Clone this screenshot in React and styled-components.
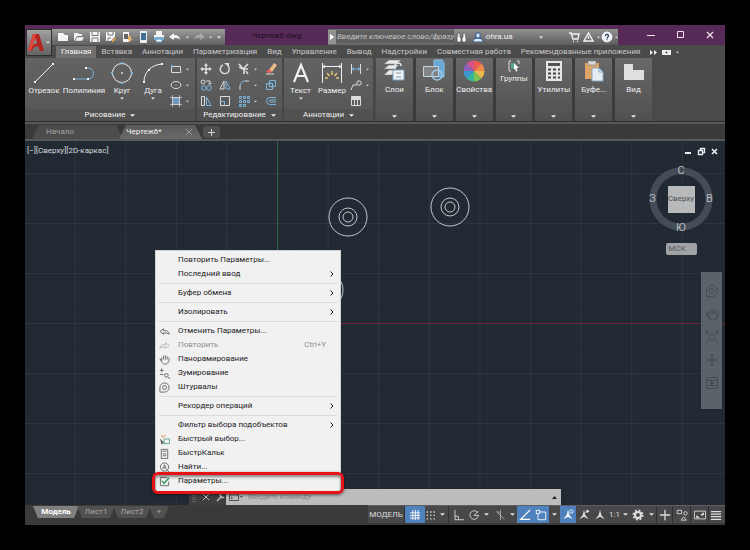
import React from "react";
import styled, { createGlobalStyle, css } from "styled-components";

const GlobalStyle = createGlobalStyle`
    * {
        box-sizing: border-box;
    }

    body {
        margin: 0;
        background: #000;
        font-family: Roboto, "Open Sans", "Noto Sans", sans-serif;
        font-size: 8px;
        line-height: 12px;
        color: #e2e2e2;
    }

    button, input {
        margin: 0;
        padding: 0;
        border: 0;
        background: none;
        color: inherit;
        font: inherit;
    }
`;

const Screen = styled.div`
    height: 100vh;
    min-height: 400px;
    padding: 25px;
`;

const Window = styled.main`
    display: flex;
    flex-direction: column;
    height: 100%;
    background: #3a3a3b;
    overflow: hidden;
`;

const Svg = styled.svg`
    display: block;
    flex: none;
    fill: none;
    stroke: currentColor;
    stroke-width: 1;
`;

const Icon = ({ w = 12, h = w, box = `0 0 ${w} ${h}`, children }) => (
    <Svg width={w} height={h} viewBox={box} aria-hidden="true">{children}</Svg>
);

const Caret = ({ w = 5 }) => (
    <Icon w={w} h={3} box="0 0 6 3"><path d="M0 0h6L3 3z" fill="currentColor" stroke="none" /></Icon>
);

/* ---------- header ---------- */

const Header = styled.header`
    display: grid;
    grid-template-columns: 27px 1fr;
    grid-template-rows: 20px 13px;
    background: #4b4b4c;
`;

const Logo = styled.button`
    grid-row: 1 / 3;
    display: flex;
    align-items: center;
    gap: 1px;
    margin: 4px 0 2px 1px;
    background: linear-gradient(#a2a2a2, #626262);
    border: 1px solid #2f2f2f;
    z-index: 1;
`;

const TitleBar = styled.div`
    display: flex;
    align-items: flex-end;
    margin-left: -27px;
    padding-left: 27px;
    background: #572a58;
`;

const QuickAccess = styled.div`
    display: flex;
    align-items: center;
    width: 173px;
    height: 16px;
    padding-left: 3px;
    background: linear-gradient(#9c9c9c, #606060);
    color: #f4f4f4;
`;

const QuickButton = styled.button`
    display: flex;
    align-items: center;
    justify-content: center;
    width: ${p => p.$w || 16}px;
    height: 16px;
    opacity: ${p => p.$dim ? 0.35 : 1};
`;

const FileName = styled.h1`
    flex: 1;
    margin: 0;
    font-size: 8px;
    font-weight: 400;
    line-height: 18px;
    text-align: center;
    color: #1c0c1d;
`;

const Search = styled.label`
    display: flex;
    align-items: center;
    width: 126px;
    height: 16px;
    background: #6d6a6d;
`;

const SearchArrow = styled.span`
    display: flex;
    align-items: center;
    justify-content: center;
    width: 8px;
    height: 14px;
    background: #929292;
`;

const SearchInput = styled.input`
    flex: 1;
    min-width: 0;
    height: 12px;
    padding: 0 0 0 1px;
    background: #5f5f5f;
    font-style: italic;

    &::placeholder {
        color: #c3c3c3;
    }
`;

const Account = styled.div`
    display: flex;
    align-items: center;
    width: 164px;
    height: 16px;
    background: linear-gradient(#929292, #5c5c5c);
    color: #f2f2f2;
`;

const WindowControls = styled.div`
    display: flex;
    align-items: center;
    width: 107px;
    height: 20px;
    padding-left: 18px;
`;

const WindowButton = styled.button`
    display: flex;
    align-items: center;
    justify-content: center;
    width: 30px;
    height: 18px;
    color: #efe6ef;
`;

const Tabs = styled.nav`
    display: flex;
    align-items: flex-end;
    padding-left: 4px;
    color: #c9c9c9;
    white-space: nowrap;
`;

const Tab = styled.button`
    height: 12px;
    padding: 0 5px;
    line-height: 12px;
    ${p => p.$active && css`
        background: #707070;
        color: #f2f2f2;
    `}
`;

const TabsExtra = styled.span`
    display: flex;
    align-items: center;
    gap: 5px;
    height: 12px;
    padding-left: 5px;
    color: #f0f0f0;
`;

/* ---------- ribbon ---------- */

const Ribbon = styled.section`
    display: flex;
    height: 64px;
    background: #4a4a4b;
    border-bottom: 1px solid #2f2f30;
    box-shadow: 0 2px #58585a;
    z-index: 1;
`;

const Panel = styled.div`
    display: flex;
    flex-direction: column;
    width: ${p => p.$w}px;
    padding-top: 3px;
    background: linear-gradient(#636364, #555556);
    border-right: 2px solid #474748;
`;

const PanelBody = styled.div`
    display: flex;
    flex: 1;
`;

const PanelTitle = styled.button`
    display: flex;
    align-items: center;
    justify-content: center;
    gap: 5px;
    height: 12px;
    background: #515152;
    color: #f0f0f0;
`;

const Tool = styled.button`
    display: flex;
    flex-direction: column;
    align-items: center;
    width: ${p => p.$w}px;
    height: 46px;
    white-space: nowrap;
    color: #f0f0f0;
`;

const ToolPicture = styled.span`
    display: flex;
    align-items: center;
    justify-content: center;
    height: 24px;
`;

const SmallTools = styled.div`
    display: grid;
    grid-template-columns: ${p => p.$cols};
    grid-template-rows: repeat(3, 16px);
    flex: 1;
    padding-left: 3px;
    color: #dcdcdc;
`;

const SmallTool = styled.button`
    display: flex;
    align-items: center;
    gap: 4px;
`;

const Groups = styled.div`
    display: grid;
    grid-template-columns: repeat(7, 1fr);
    gap: 3px;
    width: 276px;
    margin-left: 1px;
    background: #3c3c3d;
`;

const Group = styled.button`
    display: flex;
    flex-direction: column;
    align-items: center;
    background: linear-gradient(#69696a, #505051);
    color: #f0f0f0;
    white-space: nowrap;
`;

const GroupPicture = styled.span`
    display: flex;
    align-items: center;
    justify-content: center;
    height: ${p => p.$short ? 15 : 26}px;
`;

const GroupCaret = styled.span`
    margin: auto 0 3px;
`;

/* ---------- drawing tabs ---------- */

const FileTabs = styled.nav`
    display: flex;
    align-items: flex-end;
    height: 19px;
    padding-left: 7px;
    background: #3a3a38;
    border-bottom: 2px solid #58585a;
`;

const FileTab = styled.button`
    display: flex;
    align-items: center;
    justify-content: space-between;
    width: ${p => p.$w}px;
    height: 14px;
    margin-right: -4px;
    padding: 0 10px 0 ${p => p.$active ? 7 : 14}px;
    clip-path: polygon(7px 0, calc(100% - 7px) 0, 100% 100%, 0 100%);
    background: ${p => p.$active ? "linear-gradient(#5b5b5c, #69696a)" : "#4c4c4d"};
    color: ${p => p.$active ? "#f2f2f2" : "#a5a5a5"};
`;

const AddTab = styled.button`
    display: flex;
    align-items: center;
    justify-content: center;
    width: 17px;
    height: 12px;
    margin: 0 0 1px 5px;
    border-radius: 3px;
    background: #505051;
    color: #d5d5d5;
`;

/* ---------- canvas ---------- */

const Canvas = styled.section`
    position: relative;
    flex: 1;
    min-height: 0;
    background: #212a33;
`;

const Drawing = styled.svg`
    position: absolute;
    inset: 0;
    width: 100%;
    height: 100%;
    fill: none;
`;

const ViewLabel = styled.div`
    position: absolute;
    top: 4px;
    left: 2px;
    color: #d6dade;
`;

const DocControls = styled.div`
    position: absolute;
    top: 5px;
    right: 6px;
    display: flex;
    gap: 4px;
    color: #eceef0;
`;

const ViewCube = styled.div`
    position: absolute;
    top: 23px;
    right: 9px;
    display: flex;
    flex-direction: column;
    align-items: center;
    width: 70px;
    gap: 9px;
`;

const Compass = styled.div`
    display: grid;
    grid-template: 13px 1fr 13px / 13px 1fr 13px;
    place-items: center;
    width: 70px;
    height: 70px;
    font-size: 11px;
    color: #b9bdc2;
    background: radial-gradient(circle, transparent 24px, #444c55 25px, #444c55 31px, transparent 32px);
`;

const CompassMark = styled.span`
    grid-area: ${p => p.$area};
`;

const CubeFace = styled.button`
    grid-area: 2 / 2;
    width: 27px;
    height: 27px;
    background: #b8b9bb;
    font-size: 8px;
    color: #4c4f53;
`;

const Ucs = styled.button`
    width: 31px;
    height: 12px;
    padding-right: 8px;
    border-radius: 2px;
    background: #a0a2a6;
    line-height: 12px;
    color: #55585c;
`;

const NavBar = styled.div`
    position: absolute;
    top: 131px;
    right: 3px;
    display: flex;
    flex-direction: column;
    align-items: center;
    gap: 9px;
    width: 21px;
    height: 137px;
    padding-top: 12px;
    background: #5c6269;
    color: #454b53;
`;

const CommandLine = styled.label`
    position: absolute;
    bottom: 0;
    left: 164px;
    display: flex;
    align-items: center;
    width: 372px;
    height: 16px;
    background: #bcbcbd;
    color: #555;
`;

const CommandHandle = styled.span`
    display: flex;
    align-items: center;
    gap: 7px;
    width: 37px;
    height: 16px;
    padding-left: 3px;
    background: #3f3f41;
    color: #bdbdbd;
`;

const CommandInput = styled.input`
    flex: 1;
    min-width: 0;
    margin: 0 5px;
    font-style: italic;

    &::placeholder {
        color: #8a8a8a;
    }
`;

/* ---------- context menu ---------- */

const Menu = styled.div`
    position: absolute;
    top: 109px;
    left: 130px;
    width: 186px;
    padding: 2px 0 4px;
    background: #f1f1f2;
    border: 1px solid #d2d3d5;
    color: #1b1b1b;
`;

const MenuItem = styled.button`
    position: relative;
    display: grid;
    grid-template-columns: 22px 1fr auto;
    align-items: center;
    width: 100%;
    height: 14px;
    padding-right: 6px;
    text-align: left;
    white-space: nowrap;
    color: ${p => p.disabled ? "#8e8e8e" : "#1b1b1b"};
    ${p => p.$marked && css`
        &::after {
            content: "";
            position: absolute;
            inset: -2px -4px -6px;
            border: 3px solid #e51316;
            border-radius: 6px;
            box-shadow: 0 1px 3px rgba(0, 0, 0, 0.6), inset 0 2px 3px rgba(0, 0, 0, 0.45);
        }
    `}
`;

const MenuIcon = styled.span`
    display: flex;
    justify-content: center;
    width: 17px;
    color: #666;
`;

const Shortcut = styled.span`
    padding-right: 8px;
`;

const Separator = styled.hr`
    height: 1px;
    margin: 2px 3px;
    border: 0;
    background: #d9d9da;
`;

/* ---------- status bar ---------- */

const StatusBar = styled.footer`
    display: flex;
    align-items: flex-start;
    justify-content: space-between;
    height: 20px;
    padding-left: 8px;
`;

const Layouts = styled.div`
    display: flex;
    padding-top: 1px;
`;

const LayoutTab = styled.button`
    width: ${p => p.$w}px;
    height: 12px;
    margin-right: -2px;
    clip-path: polygon(0 0, 100% 0, calc(100% - 5px) 100%, 5px 100%);
    background: ${p => p.$active ? "#808081" : "#515152"};
    color: ${p => p.$active ? "#fff" : "#a8a8a8"};
    font-weight: ${p => p.$active ? 700 : 400};
`;

const Modes = styled.div`
    display: flex;
    height: 18px;
    padding-right: 3px;
    background: #48484a;
    border-top: 1px solid #5e5e60;
    color: #dedede;
`;

const Mode = styled.button`
    display: flex;
    align-items: center;
    justify-content: center;
    width: ${p => p.$w}px;
    background: ${p => p.$on ? "#4f82bd" : "none"};
    color: ${p => p.$on ? "#fff" : "inherit"};
    border-right: ${p => p.$line ? "1px solid #303032" : "0"};
    white-space: nowrap;
`;

/* ---------- icon drawings ---------- */

const blue = "#7db4dc";

const quick = [
    { name: "Создать", icon: <path d="M1 2h5l2 2h3v6H1z" fill="currentColor" stroke="none" /> },
    { name: "Открыть", icon: <><path d="M1 10V2h4l1 1h3v2H4z" fill="currentColor" stroke="none" /><path d="M4 6h7.5L9 10H2z" fill="currentColor" stroke="#777" strokeWidth=".5" /></> },
    { name: "Сохранить", icon: <><path d="M1 1h10v10H1z" fill="currentColor" stroke="none" /><path d="M3 1v3.500h6V1M3 11V7h6v4" stroke="#777" /></> },
    { name: "Сохранить как", icon: <><path d="M1 1h9v9H1z" fill="currentColor" stroke="none" /><path d="M3 1v3h5V1M3 10V7h3" stroke="#777" /><path d="M6 10l4-4 1.500 1.500-4 4z" fill="#e0a557" stroke="#555" strokeWidth=".5" /></> },
    { name: "Из облака", icon: <><path d="M2 1h6v10H2z" fill="currentColor" stroke="none" /><path d="M3 3h4v5H3z" fill="#666" stroke="none" /><path d="M7 5h3v3h1.500L9 11 6.500 8H7z" fill="#e2b263" stroke="none" /></> },
    { name: "В облако", icon: <><path d="M3 0h7v12H3z" fill="#e9edf0" stroke="none" /><path d="M4 2h5v7H4z" fill="#3f6d94" stroke="none" /></> },
    { name: "Печать", icon: <><path d="M3 0h6v4H3zM1 4h10v5H1z" fill="currentColor" stroke="none" /><path d="M1 6h10v3H1z" fill={blue} stroke="none" /><path d="M3 8h6v3H3z" fill="#fff" stroke="#5590bd" /></> },
];

const Undo = () => <Icon w={12}><path d="M0 6l5-4v2c4 0 6 2 6 5-1-2-3-2-6-2v2z" fill="currentColor" stroke="none" /></Icon>;
const Redo = () => <Icon w={12}><path d="M12 6L7 2v2C3 4 1 6 1 9c1-2 3-2 6-2v2z" fill="currentColor" stroke="none" /></Icon>;

const drawTools = [
    { label: "Отрезок", w: 38, icon: <Icon w={22}><path d="M2 20L20 2" /><path d="M1 19h2v2H1zM19 1h2v2h-2z" fill="currentColor" stroke="none" /></Icon> },
    { label: "Полилиния", w: 42, icon: <Icon w={24} h={22}><path d="M2 17h14a5 5 0 0 0 0-11h-1" stroke={blue} /><path d="M1 16h2v2H1zM15 16h2v2h-2zM13 5h2v2h-2z" fill="currentColor" stroke="none" /></Icon> },
    { label: "Круг", w: 34, caret: true, icon: <Icon w={22}><circle cx="11" cy="11" r="9.500" /><circle cx="11" cy="11" r=".6" /><path d="M10 0h2v2h-2zM10 20h2v2h-2zM0 10h2v2H0zM20 10h2v2h-2z" fill={blue} stroke="none" /></Icon> },
    { label: "Дуга", w: 28, caret: true, icon: <Icon w={22}><path d="M2 20C2 10 9 3 20 2" /><path d="M1 19h2v2H1zM19 1h2v2h-2zM6 7h2v2H6z" fill="currentColor" stroke="none" /></Icon> },
];

const drawSmall = [
    <><path d="M1.500 3.500h9v6h-9z" /><path d="M1 3h1.500M10 9h1.500" stroke={blue} strokeWidth="2" /></>,
    <><ellipse cx="6" cy="6" rx="5" ry="3.500" /><path d="M5.500 6h1" /></>,
    <><path d="M2.500 2.500h7v7h-7z" fill="#7198bb" stroke={blue} /><path d="M0 2.500h12M0 9.500h12M2.500 0v12M9.500 0v12" strokeWidth=".7" /></>,
];

const editSmall = [
    { name: "Перенести", icon: <><path d="M6 1v10M1 6h10" strokeWidth="1.500" /><path d="M4 3l2-3 2 3zM4 9l2 3 2-3zM3 4L0 6l3 2zM9 4l3 2-3 2z" fill="currentColor" stroke="none" /></> },
    { name: "Повернуть", icon: <><path d="M4 2a4.500 4.500 0 1 0 5 1" strokeWidth="1.400" /><path d="M5 0h5v4z" fill="currentColor" stroke="none" /></> },
    { name: "Обрезать", caret: true, icon: <><path d="M1 1l4 5h5M10 1L6 5v6" strokeWidth="1.700" /><path d="M1 4l3 2M8 8l2 3" strokeWidth="1.400" /></> },
    { name: "Стереть", icon: <><path d="M4 7l5-7 3 2-5 7z" fill="#e9bd86" stroke="none" /><path d="M1 9l3-3 3 3-3 1z" fill="#e8605c" stroke="none" /><path d="M1 11h8" /></> },
    { name: "Копировать", icon: <><circle cx="3" cy="3" r="2" /><circle cx="4" cy="9" r="2.300" stroke={blue} /><circle cx="9" cy="9" r="2.300" stroke={blue} /><path d="M6 2h4v3M8.500 4L10 5.500 11.500 4" /></> },
    { name: "Зеркало", icon: <><path d="M5 2v8H1z" /><path d="M7 2v8h4z" stroke={blue} /></> },
    { name: "Сопряжение", caret: true, icon: <><path d="M2 11V6M7 2h4" /><path d="M2 7c0-3 2-5 5-5" stroke={blue} /></> },
    { name: "Расчленить", icon: <><path d="M1.500 4.500h6v6h-6zM4.500 1.500h6v6h-6z" stroke={blue} /><circle cx="6" cy="6" r="2" stroke={blue} /></> },
    { name: "Растянуть", icon: <><path d="M1.500 1.500h3v9h-3z" /><path d="M6.500 2v8.500h4.500z" stroke={blue} /></> },
    { name: "Масштаб", icon: <><path d="M1.500 1.500h9v9h-9z" /><path d="M1.500 6.500h4v4" stroke={blue} /></> },
    { name: "Массив", caret: true, icon: <path d="M1.500 1.500h2v2h-2zM5.500 1.500h2v2h-2zM9.500 1.500h2v2h-2zM1.500 5.500h2v2h-2zM5.500 5.500h2v2h-2zM9.500 5.500h2v2h-2zM1.500 9.500h2v2h-2zM5.500 9.500h2v2h-2z" stroke={blue} /> },
    { name: "Подобие", icon: <path d="M11 2.500H5a3.500 3.500 0 0 0 0 7h6M11 5H5.500a1 1 0 0 0 0 2H11" stroke={blue} /> },
];

const noteSmall = [
    { name: "Линейный", caret: true, icon: <><path d="M1.500 1v10M10.500 1v10" /><path d="M2 6h8M4 4.500L2 6l2 1.500M8 4.500L10 6 8 7.500" stroke={blue} /></> },
    { name: "Выноска", caret: true, icon: <><path d="M1 11l2-5h4" /><circle cx="9" cy="4" r="2.200" /></> },
    { name: "Таблица", icon: <><path d="M1.500 1.500h9v9h-9zM1.500 4.500h9M4.500 4.500v6M7.500 4.500v6" /><path d="M2 2h8v2H2z" fill="currentColor" stroke="none" /></> },
];

const groups = [
    {
        label: "Слои",
        icon: <Icon w={24}><path d="M7 1h12l-5 4H2z M7 6h10l-5 4H2zM7 11h7l-4 5H2z" fill="#e9e9e9" stroke="#777" strokeWidth=".5" /><path d="M13 10V7a3 3 0 0 1 6 0" stroke="#dfe9f1" strokeWidth="1.500" /><path d="M11 11h11v10H11z" fill="#eef2f5" stroke="#7ca8c9" /><path d="M14 18h5M14 14h5" stroke="#8794a0" /></Icon>,
    },
    {
        label: "Блок",
        icon: <Icon w={24}><path d="M12 1h8l2 3v14H12z" fill="#69a9d8" stroke="#8ac0e6" /><path d="M1.500 7.500h15v10h-15z" fill="#808487" stroke="#c7d3db" /><circle cx="15" cy="16" r="5" stroke="#9fcbe9" strokeWidth="1.500" /></Icon>,
    },
    {
        label: "Свойства",
        icon: (
            <Icon w={22} box="-11 -11 22 22">
                {["#ee5b4c", "#f08a4b", "#ebb94d", "#7dc352", "#35b59a", "#3d98d2", "#8c62bd", "#d8508b"].map((fill, i) => (
                    <path key={fill} d="M0 0V-10.500A10.500 10.500 0 0 1 7.420 -7.420z" fill={fill} stroke="none" transform={`rotate(${i * 45})`} />
                ))}
            </Icon>
        ),
    },
    {
        label: "Группы",
        short: true,
        icon: <Icon w={12}><path d="M3 1H1v10h2M9 1h2v3" stroke="#dcdcdc" /><path d="M3 3h3v6H3z" fill="#55a68b" stroke="none" /><path d="M6 3l5 5H8.500l1 3-1.500.5-1-3L6 10z" fill="#fff" stroke="none" /></Icon>,
    },
    {
        label: "Утилиты",
        icon: <Icon w={16} h={22}><path d="M0 1h16v20H0z" fill="#e6e6e6" stroke="none" /><path d="M2 3h12v3H2z" fill="#555" stroke="none" /><path d="M2 9.500h3m2 0h3m2 0h2M2 13.500h3m2 0h3m2 0h2M2 17.500h3m2 0h3m2 0h2" stroke="#444" strokeWidth="2" /></Icon>,
    },
    {
        label: "Буфе...",
        icon: <Icon w={20} h={22}><path d="M1 3h14v16H1z" fill="#dca668" stroke="none" /><path d="M4 1h8v4H4z" fill="#d5d7da" stroke="#777" strokeWidth=".5" /><path d="M8 8h7l4 4v9H8z" fill="#e8edf2" stroke="#89a9c4" /><path d="M15 8v4h4" stroke="#89a9c4" /></Icon>,
    },
    {
        label: "Вид",
        icon: <Icon w={22}><path d="M1 4h9v6h11v10H1z" fill="#dedfe0" stroke="none" /></Icon>,
    },
];

const menuIcons = {
    undo: <path d="M1 6l4-3v2c4 0 6 1 6 4-1-1-3-1.500-6-1.500V9z" />,
    redo: <path d="M11 6L7 3v2C3 5 1 6 1 9c1-1 3-1.500 6-1.500V9z" opacity=".4" />,
    hand: <path d="M3 7V3.500M5 6V1.500M7 6V1.500M9 6V2.500M11 7V4M3 7L1 5.500 4 10c2 2 6 1.500 7-3" />,
    zoom: <><path d="M1 2.500h4M3 .5v4M1 7h4" /><circle cx="8" cy="8" r="2" /><path d="M9.500 9.500L12 12" /></>,
    wheel: <><path d="M1 11V6a5 5 0 1 1 5 5z" /><circle cx="6" cy="6" r="2.200" /></>,
    select: <><path d="M1 5l5 5H4l-1 2z" fill="#555" stroke="none" /><path d="M5.500 5.500h6v5h-6z" stroke="#5ba18b" /><path d="M3 1l1 3M7 1L5 4" stroke="#e08c42" /></>,
    calc: <><path d="M2.500 1.500h7v10h-7z" /><path d="M4 3.500h4M4 6.500h4M4 8.500h4" /></>,
    find: <><circle cx="6" cy="5.500" r="4.500" /><path d="M4 8l2-5 2 5M5 6.500h2M9 9l2.500 2.500" /></>,
    options: <><path d="M9 1.500H1.500v9h9V6" /><path d="M3 5l2.500 3L11 2" stroke="#3a9a64" strokeWidth="1.500" /></>,
};

const menuGroups = [
    [{ text: "Повторить Параметры..." }, { text: "Последний ввод", sub: true }],
    [{ text: "Буфер обмена", sub: true }],
    [{ text: "Изолировать", sub: true }],
    [
        { text: "Отменить Параметры...", icon: "undo" },
        { text: "Повторить", icon: "redo", disabled: true, keys: "Ctrl+Y" },
        { text: "Панорамирование", icon: "hand" },
        { text: "Зумирование", icon: "zoom" },
        { text: "Штурвалы", icon: "wheel" },
    ],
    [{ text: "Рекордер операций", sub: true }],
    [
        { text: "Фильтр выбора подобъектов", sub: true },
        { text: "Быстрый выбор...", icon: "select" },
        { text: "БыстрКальк", icon: "calc" },
        { text: "Найти...", icon: "find" },
        { text: "Параметры...", icon: "options", marked: true },
    ],
];

const tabs = [
    "Главная", "Вставка", "Аннотации", "Параметризация", "Вид", "Управление",
    "Вывод", "Надстройки", "Совместная работа", "Рекомендованные приложения",
];

const annotate = <path d="M7 1l1.500 6 4 5L7 9l-5.500 3 4-5z" fill="currentColor" stroke="none" />;

const modes = [
    { name: "МОДЕЛЬ", w: 37, text: true, line: true },
    { name: "Сетка", w: 20, on: true, icon: <path d="M4.500 1v12M7.500 1v12M10.500 1v12M1 4.500h12M1 7.500h12M1 10.500h12" /> },
    { name: "Шаг", w: 12, icon: <path d="M2 3.500h11M2 7.500h11M2 11.500h11" strokeWidth="1.500" strokeDasharray="1.500 2.500" /> },
    { name: "Параметры шага", w: 12, caret: true, line: true },
    { name: "Орто", w: 18, icon: <path d="M3.500 1v11.500H14M3.500 8.500h4v4" /> },
    { name: "Полярное отслеживание", w: 13, icon: <path d="M11.500 4.500a5 5 0 1 0 .5 4M7 7.500h6M7 7.500l5-5" /> },
    { name: "Углы", w: 12, caret: true },
    { name: "Изометрия", w: 15, icon: <path d="M7.500 1v12M3 3l9 9M4 2l2 3" opacity=".7" /> },
    { name: "Изоплоскость", w: 10, caret: true },
    { name: "Объектное отслеживание", w: 16, on: true, icon: <path d="M13 1L2 12h11" strokeWidth="1.500" /> },
    { name: "Объектная привязка", w: 16, on: true, icon: <><path d="M3.500 3.500h9v9h-9z" /><path d="M1.500 1.500h4v4h-4z" fill="#4f82bd" /></> },
    { name: "Режимы привязки", w: 11, caret: true },
    { name: "Видимость аннотаций", w: 16, on: true, icon: <>{annotate}<circle cx="11" cy="3" r="2" /></> },
    { name: "Автомасштаб", w: 16, icon: <>{annotate}<path d="M9 4l2-3 2 2z" fill="currentColor" /></> },
    { name: "Аннотации", w: 16, icon: annotate },
    { name: "1:1", w: 13, text: true },
    { name: "Масштаб аннотаций", w: 9, caret: true },
    { name: "Рабочее пространство", w: 16, icon: <><circle cx="7" cy="7" r="3.500" strokeWidth="2.500" /><circle cx="7" cy="7" r="5.500" strokeWidth="2" strokeDasharray="2.200 2.120" /></> },
    { name: "Пространства", w: 11, caret: true, line: true },
    { name: "Монитор аннотаций", w: 16, line: true, icon: <path d="M7 1v12M1 7h12" strokeWidth="1.500" /> },
    { name: "Изоляция объектов", w: 18, line: true, icon: <><path d="M1.500 1.500h5v4h-5zM6 13l3-4 3 4z" /><circle cx="11" cy="5" r="2" /></> },
    { name: "Очистить экран", w: 18, line: true, icon: <><path d="M.5 2.500h13v9H.5z" /><path d="M8 7l3-2.500v2.500zM3 10V8l3 2z" fill="currentColor" /></> },
    { name: "Адаптация", w: 13, icon: <path d="M1 3h12M1 6h12M1 9h12M1 12h12" strokeWidth="1.500" /> },
];

/* ---------- sections ---------- */

const TopBar = () => (
    <Header>
        <Logo aria-label="Меню приложения">
            <Icon w={18} h={20}>
                <path d="M1 18L6 1h6l5 17h-4l-2-5-5 2-1 3z" fill="#b3231f" stroke="none" />
                <path d="M1 18L6 1h3L7 9l-2 6-1 3z" fill="#e0473c" stroke="none" />
                <path d="M7 9l1.500-4L10 10l-4 2z" fill="#8e8e8e" stroke="none" />
            </Icon>
            <Caret w={4} />
        </Logo>
        <TitleBar>
            <QuickAccess>
                {quick.map(q => (
                    <QuickButton key={q.name} aria-label={q.name}><Icon w={12}>{q.icon}</Icon></QuickButton>
                ))}
                <QuickButton aria-label="Отменить"><Undo /></QuickButton>
                <QuickButton aria-label="История отмены" $w={8}><Caret w={3} /></QuickButton>
                <QuickButton aria-label="Повторить" $dim><Redo /></QuickButton>
                <QuickButton aria-label="История повтора" $w={6}><Caret w={3} /></QuickButton>
                <QuickButton aria-label="Настройка панели" $w={12}><Caret w={4} /></QuickButton>
            </QuickAccess>
            <FileName>Чертеж6.dwg</FileName>
            <Search>
                <SearchArrow><Icon w={4} h={6}><path d="M0 0l4 3-4 3z" fill="#fff" stroke="none" /></Icon></SearchArrow>
                <SearchInput aria-label="Поиск" placeholder="Введите ключевое слово/фразу" />
            </Search>
            <Account>
                <QuickButton aria-label="Найти" $w={16}>
                    <Icon w={11}><path d="M2 1h2v4l1 1v4H1V6zM7 1h2l1 5v4H6V6l1-1z" fill="currentColor" stroke="#444" strokeWidth=".6" /></Icon>
                </QuickButton>
                <QuickButton aria-label="Пользователь" $w={17}>
                    <Icon w={10}><path d="M3 1h4v5H3zM0 10c0-3 3-4 5-4s5 1 5 4z" fill="#dbe8f5" stroke="#2c5890" /></Icon>
                </QuickButton>
                <span>ohra.ua</span>
                <QuickButton aria-label="Учётная запись" $w={58}><Caret w={4} /></QuickButton>
                <QuickButton aria-label="Магазин приложений" $w={12}>
                    <Icon w={11}><path d="M0 1h2l2 6h5l1-5H3M4 9.500h1M8 9.500h1" strokeWidth="1.400" /></Icon>
                </QuickButton>
                <QuickButton aria-label="Сообщество" $w={17}>
                    <Icon w={11}><path d="M5.500 1L10 9H1zM5.500 4v3" strokeWidth="1.400" /></Icon>
                </QuickButton>
                <QuickButton aria-label="Меню сообщества" $w={3}><Caret w={3} /></QuickButton>
                <QuickButton aria-label="Справка">
                    <Icon w={12}><circle cx="6" cy="6" r="5" fill="#eef2f7" /><path d="M4.500 5a1.500 1.500 0 1 1 2 1.200L6 7.500M6 8.300v1" stroke="#30405e" strokeWidth="1.200" /></Icon>
                </QuickButton>
                <QuickButton aria-label="Меню справки" $w={3}><Caret w={3} /></QuickButton>
            </Account>
            <WindowControls>
                <WindowButton aria-label="Свернуть"><Icon w={8}><path d="M0 4.500h8" /></Icon></WindowButton>
                <WindowButton aria-label="Развернуть"><Icon w={8}><path d="M.5.5h6v6h-6z" /></Icon></WindowButton>
                <WindowButton aria-label="Закрыть"><Icon w={8}><path d="M1 1l6 6M7 1L1 7" strokeWidth="1.200" /></Icon></WindowButton>
            </WindowControls>
        </TitleBar>
        <Tabs>
            {tabs.map((tab, i) => <Tab key={tab} $active={i === 0}>{tab}</Tab>)}
            <TabsExtra>
                <Icon w={7} h={5}><path d="M0 0l3 2.500L0 5zM4 0l3 2.500L4 5z" fill="currentColor" stroke="none" /></Icon>
                <Icon w={9} h={5}><path d="M0 0h9v5H0z" fill="currentColor" stroke="none" /><circle cx="4.500" cy="2.500" r="1" fill="#444" stroke="none" /></Icon>
                <Caret w={3} />
            </TabsExtra>
        </Tabs>
    </Header>
);

const BigTool = ({ label, w, caret, icon }) => (
    <Tool $w={w}>
        <ToolPicture>{icon}</ToolPicture>
        <span>{label}</span>
        {caret && <Caret w={4} />}
    </Tool>
);

const MainRibbon = () => (
    <Ribbon>
        <Panel $w={172}>
            <PanelBody>
                {drawTools.map(tool => <BigTool key={tool.label} {...tool} />)}
                <SmallTools $cols="1fr">
                    {drawSmall.map((icon, i) => (
                        <SmallTool key={i} aria-label={["Прямоугольник", "Эллипс", "Штриховка"][i]}>
                            <Icon w={12}>{icon}</Icon><Caret w={3} />
                        </SmallTool>
                    ))}
                </SmallTools>
            </PanelBody>
            <PanelTitle>Рисование <Caret /></PanelTitle>
        </Panel>
        <Panel $w={87}>
            <PanelBody>
                <SmallTools $cols="19px 19px 27px 1fr">
                    {editSmall.map(tool => (
                        <SmallTool key={tool.name} aria-label={tool.name}>
                            <Icon w={12}>{tool.icon}</Icon>{tool.caret && <Caret w={3} />}
                        </SmallTool>
                    ))}
                </SmallTools>
            </PanelBody>
            <PanelTitle>Редактирование <Caret /></PanelTitle>
        </Panel>
        <Panel $w={91}>
            <PanelBody>
                <BigTool label="Текст" w={33} caret icon={<Icon w={18} h={22}><path d="M2 20L9 3l7 17M4.500 14h9" strokeWidth="2.200" /></Icon>} />
                <BigTool label="Размер" w={30} icon={
                    <Icon w={22}>
                        <path d="M1.500 1v20M20.500 1v20M2 4.500h18M4 3L2 4.500 4 6M18 3l2 1.500L18 6" />
                        <path d="M11 9v4M6 11l2.500 3M16 11l-2.500 3M4 16h3M15 16h3" stroke="#e8c374" strokeWidth="1.500" />
                    </Icon>
                } />
                <SmallTools $cols="1fr">
                    {noteSmall.map(tool => (
                        <SmallTool key={tool.name} aria-label={tool.name}>
                            <Icon w={12}>{tool.icon}</Icon>{tool.caret && <Caret w={3} />}
                        </SmallTool>
                    ))}
                </SmallTools>
            </PanelBody>
            <PanelTitle>Аннотации <Caret /></PanelTitle>
        </Panel>
        <Groups>
            {groups.map(group => (
                <Group key={group.label}>
                    <GroupPicture $short={group.short}>{group.icon}</GroupPicture>
                    <span>{group.label}</span>
                    <GroupCaret><Caret w={5} /></GroupCaret>
                </Group>
            ))}
        </Groups>
    </Ribbon>
);

const ContextMenu = () => (
    <Menu role="menu">
        {menuGroups.map((items, i) => (
            <React.Fragment key={items[0].text}>
                {i > 0 && <Separator />}
                {items.map(item => (
                    <MenuItem key={item.text} role="menuitem" disabled={item.disabled} $marked={item.marked}>
                        <MenuIcon>{item.icon && <Icon w={11} box="0 0 12 12">{menuIcons[item.icon]}</Icon>}</MenuIcon>
                        <span>{item.text}</span>
                        {item.keys && <Shortcut>{item.keys}</Shortcut>}
                        {item.sub && <Icon w={4} h={6}><path d="M.5.5L3 3 .5 5.500" /></Icon>}
                    </MenuItem>
                ))}
            </React.Fragment>
        ))}
    </Menu>
);

const Bolt = ({ x, y }) => (
    <g stroke="#c3c8cd" strokeWidth="1">
        <circle cx={x} cy={y} r="19" />
        <circle cx={x} cy={y} r="9" />
        <circle cx={x} cy={y} r="5" />
    </g>
);

const Model = () => (
    <Canvas>
        <Drawing>
            <defs>
                <pattern id="minor" x="252" y="182" width="10" height="10" patternUnits="userSpaceOnUse">
                    <path d="M.5 0v10M0 .5h10" stroke="#232c35" />
                </pattern>
                <pattern id="major" x="252" y="182" width="50.600" height="50" patternUnits="userSpaceOnUse">
                    <path d="M.5 0v50M0 .5h51" stroke="#2b3740" />
                </pattern>
            </defs>
            <rect width="100%" height="100%" fill="url(#minor)" />
            <rect width="100%" height="100%" fill="url(#major)" />
            <path d="M252.500 0v182" stroke="#2d6647" />
            <line x1="252" y1="182.500" x2="100%" y2="182.500" stroke="#6a2637" />
            <Bolt x={323} y={76} />
            <Bolt x={425} y={66} />
            <Bolt x={299} y={149} />
        </Drawing>
        <ViewLabel>[−][Сверху][2D-каркас]</ViewLabel>
        <DocControls>
            <Icon w={9} h={10}><path d="M1 7h6" strokeWidth="2" /></Icon>
            <Icon w={9} h={10}><path d="M1.500 4.500h4v4h-4zM3.500 4V2.500h4v4H6" strokeWidth="1.300" /></Icon>
            <Icon w={9} h={10}><path d="M2 3l5 5M7 3L2 8" strokeWidth="1.600" /></Icon>
        </DocControls>
        <ViewCube>
            <Compass>
                <CompassMark $area="1 / 2">С</CompassMark>
                <CompassMark $area="2 / 1">З</CompassMark>
                <CubeFace>Сверху</CubeFace>
                <CompassMark $area="2 / 3">В</CompassMark>
                <CompassMark $area="3 / 2">Ю</CompassMark>
            </Compass>
            <Ucs>МСК</Ucs>
        </ViewCube>
        <NavBar>
            <Icon w={14}><path d="M1.500 13V7A5.500 5.500 0 1 1 7 12.500z" /><circle cx="7" cy="7" r="2.500" /></Icon>
            <Icon w={14} box="0 0 12 12">{menuIcons.hand}</Icon>
            <Icon w={14}><circle cx="7" cy="7" r="3" /><path d="M1 1l3 3M13 1l-3 3M1 13l3-3M13 13l-3-3M1 4V1h3M10 1h3v3" /></Icon>
            <Icon w={14}><path d="M7 1v12M1 7h12M5 3l2-2 2 2M5 11l2 2 2-2" /><circle cx="7" cy="7" r="2" /></Icon>
            <Icon w={14}><path d="M1.500 1.500h11v11h-11zM1.500 4.500h11M1.500 9.500h11" /><path d="M6 5.500v3L9 7z" fill="currentColor" /></Icon>
        </NavBar>
        <CommandLine>
            <CommandHandle>
                <Icon w={4} h={12}><path d="M1 0v12M3 0v12" strokeDasharray="1 1" opacity=".5" /></Icon>
                <Icon w={6} h={6}><path d="M0 0l6 6M6 0L0 6" /></Icon>
                <Icon w={9} h={9}><path d="M1 8l5-5" strokeWidth="1.500" /><path d="M5 1a2 2 0 0 0 3 3" strokeWidth="1.500" /></Icon>
            </CommandHandle>
            <Icon w={17} h={10}><path d="M3.500 1.500h9v7h-9zM3.500 3h9M5 5l1.500 1L5 7" /><path d="M14 4h3l-1.500 2z" fill="currentColor" stroke="none" /></Icon>
            <CommandInput placeholder="Введите команду" />
            <Icon w={12} h={4}><path d="M3 4h5L5.500 1z" fill="#222" stroke="none" /></Icon>
        </CommandLine>
        <ContextMenu />
    </Canvas>
);

const Status = () => (
    <StatusBar>
        <Layouts>
            <LayoutTab $w={46} $active>Модель</LayoutTab>
            <LayoutTab $w={38}>Лист1</LayoutTab>
            <LayoutTab $w={38}>Лист2</LayoutTab>
            <LayoutTab $w={20} aria-label="Новый лист">+</LayoutTab>
        </Layouts>
        <Modes>
            {modes.map(mode => (
                <Mode key={mode.name} aria-label={mode.name} $w={mode.w} $on={mode.on} $line={mode.line}>
                    {mode.text && mode.name}
                    {mode.caret && <Caret />}
                    {mode.icon && <Icon w={12} box="0 0 14 14">{mode.icon}</Icon>}
                </Mode>
            ))}
        </Modes>
    </StatusBar>
);

const App = () => (
    <>
        <GlobalStyle />
        <Screen>
            <Window>
                <TopBar />
                <MainRibbon />
                <FileTabs>
                    <FileTab $w={91}>Начало</FileTab>
                    <FileTab $w={83} $active>
                        Чертеж6*
                        <Icon w={6}><path d="M0 0l6 6M6 0L0 6" stroke="#999" /></Icon>
                    </FileTab>
                    <AddTab aria-label="Новый чертёж"><Icon w={7}><path d="M3.500 0v7M0 3.500h7" /></Icon></AddTab>
                </FileTabs>
                <Model />
                <Status />
            </Window>
        </Screen>
    </>
);

export default App;
